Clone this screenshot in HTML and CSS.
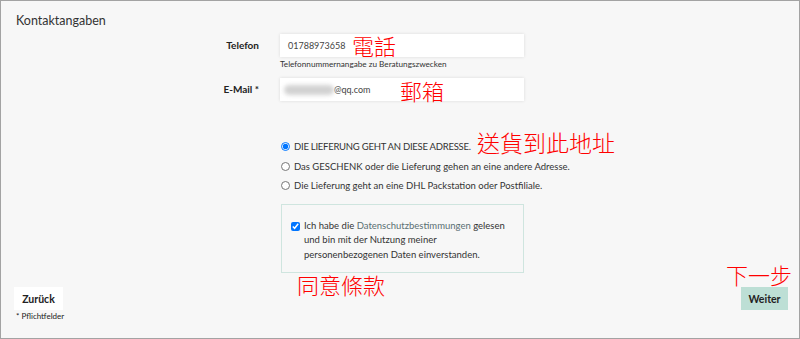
FILE: index.html
```html
<!DOCTYPE html>
<html lang="de">
<head>
    <meta charset="UTF-8">
    <meta name="viewport" content="width=device-width, initial-scale=1.0">
    <title>Kontaktangaben</title>
    <link rel="stylesheet" href="styles.css">
</head>
<body>

    <div class="page">
        <h2 class="section-title">Kontaktangaben</h2>

        <div class="field">
            <label class="field-label" for="phone">Telefon</label>
            <div class="field-control">
                <div class="input" id="phone">01788973658<span class="note note-phone">電話</span></div>
                <p class="hint">Telefonnummernangabe zu Beratungszwecken</p>
            </div>
        </div>

        <div class="field field-mail">
            <label class="field-label" for="mail">E-Mail *</label>
            <div class="field-control">
                <div class="input" id="mail"><span class="blurred"></span>@qq.com<span class="note note-mail">郵箱</span></div>
            </div>
        </div>

        <div class="options">
            <label class="option">
                <input type="radio" name="delivery" checked>
                <span class="caps">DIE LIEFERUNG GEHT AN DIESE ADRESSE.</span>
                <span class="note note-address">送貨到此地址</span>
            </label>
            <label class="option">
                <input type="radio" name="delivery">
                <span>Das GESCHENK oder die Lieferung gehen an eine andere Adresse.</span>
            </label>
            <label class="option">
                <input type="radio" name="delivery">
                <span>Die Lieferung geht an eine DHL Packstation oder Postfiliale.</span>
            </label>
        </div>

        <div class="consent">
            <input type="checkbox" checked>
            <p>Ich habe die <a href="#">Datenschutzbestimmungen</a> gelesen und bin mit der Nutzung meiner personenbezogenen Daten einverstanden.</p>
            <span class="note note-terms">同意條款</span>
        </div>

        <div class="footer">
            <div class="footer-left">
                <button class="btn btn-back">Zurück</button>
                <p class="required">* Pflichtfelder</p>
            </div>
            <div class="footer-right">
                <span class="note note-next">下一步</span>
                <button class="btn btn-next">Weiter</button>
            </div>
        </div>
    </div>

</body>
</html>
```

FILE: styles.css
```css
* {
    box-sizing: border-box;
}

body {
    margin: 0;
    padding: 0;
    font-family: Lato, "Liberation Sans", sans-serif;
    color: #333;
    background-color: #fff;
}

.page {
    width: 800px;
    height: 339px;
    border: 1px solid #a3a3a3;
    background-color: #f7f7f7;
    overflow: hidden;
}

.section-title {
    margin: 12px 0 0 15px;
    font-size: 12.5px;
    line-height: 16px;
    font-weight: normal;
    color: #333;
}

/* form rows */
.field {
    display: grid;
    grid-template-columns: 258px 244px;
    column-gap: 21px;
    margin-top: 5px;
}

.field-mail {
    margin-top: 9px;
}

.field-label {
    text-align: right;
    font-size: 10px;
    font-weight: bold;
    line-height: 23px;
    color: #222;
}

.input {
    position: relative;
    height: 23px;
    padding-left: 8px;
    background-color: #fff;
    box-shadow: 0 0 3px rgba(0, 0, 0, 0.12);
    font-size: 9px;
    line-height: 23px;
    color: #444;
    display: flex;
    align-items: center;
}

.blurred {
    display: inline-block;
    width: 50px;
    height: 10px;
    margin-left: -4px;
    border-radius: 5px;
    background-color: #d2d2d2;
    filter: blur(2px);
}

.hint {
    margin: 2px 0 0;
    font-size: 8.2px;
    line-height: 10px;
    color: #333;
}

/* delivery */
.options {
    margin: 36px 0 0 280px;
}

.option {
    position: relative;
    display: flex;
    align-items: center;
    height: 19.5px;
    font-size: 9.5px;
    color: #333;
}

.option .caps {
    letter-spacing: -0.25px;
}

.option input {
    width: 9px;
    height: 9px;
    margin: 0 4px 0 0;
}

.consent {
    position: relative;
    display: flex;
    align-items: flex-start;
    width: 243px;
    height: 69px;
    margin: 8px 0 0 280px;
    padding: 14px 10px 0 9px;
    border: 1px solid #cfe5df;
}

.consent input {
    width: 9px;
    height: 9px;
    margin: 3px 4px 0 0;
    flex: none;
}

.consent p {
    margin: 0;
    width: 212px;
    font-size: 9.5px;
    line-height: 14.5px;
    color: #333;
}

.consent a {
    color: #5a6f73;
    text-decoration: none;
}

/* footer */
.footer {
    display: flex;
    justify-content: space-between;
    align-items: flex-start;
    margin-top: 14px;
    padding: 0 11px 0 13px;
}

.btn {
    height: 23px;
    border: none;
    font-family: Lato, "Liberation Sans", sans-serif;
    font-size: 10.5px;
    font-weight: bold;
    color: #222;
    cursor: pointer;
}

.btn-back {
    width: 49px;
    background-color: #fff;
}

.btn-next {
    width: 47px;
    background-color: #bddfd5;
}

.required {
    margin: 1px 0 0 2px;
    font-size: 8px;
    line-height: 10px;
    color: #222;
}

.footer-right {
    position: relative;
}

/* red annotations over the screenshot */
.note {
    position: absolute;
    font-family: "Noto Sans CJK TC", sans-serif;
    font-weight: 300;
    color: #ff0000;
    font-size: 22px;
    line-height: 24px;
    white-space: nowrap;
}

.note-phone {
    left: 72px;
    top: -1px;
}

.note-mail {
    left: 120px;
    top: 0;
}

.note-address {
    left: 196px;
    top: -7px;
    font-size: 23px;
}

.note-terms {
    left: 15px;
    top: 67px;
}

.note-next {
    right: -4px;
    top: -25px;
}
```
